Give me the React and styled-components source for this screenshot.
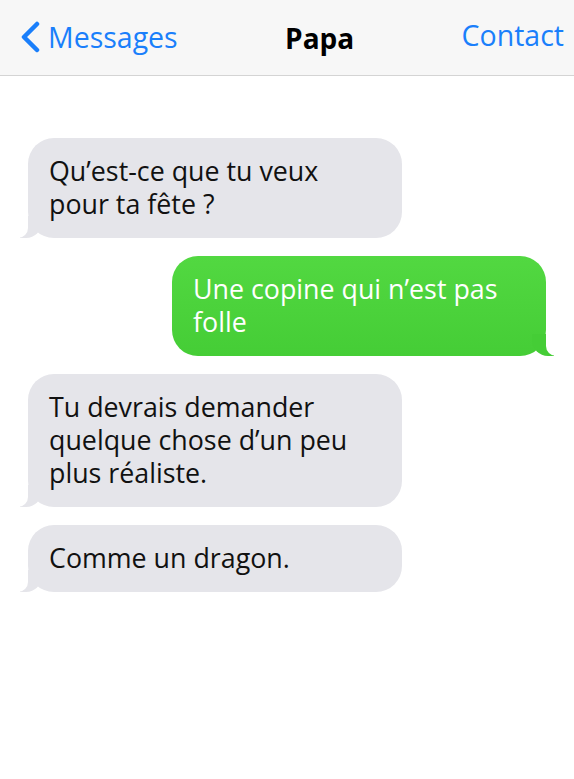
import styled, { createGlobalStyle } from "styled-components"

const GlobalStyle = createGlobalStyle`
  body {
    margin: 0;
    background: #ffffff;
    font-family: "Open Sans", "Liberation Sans", sans-serif;
  }
`;

const Screen = styled.div`
  width: 574px;
  min-height: 779px;
  background: #ffffff;
`;

const Header = styled.header`
  height: 75px;
  display: flex;
  align-items: center;
  justify-content: space-between;
  padding: 0 10px 0 20px;
  background: #f7f7f7;
  border-bottom: 1px solid #d4d4d4;
`;

const BackLink = styled.div`
  display: flex;
  align-items: center;
  gap: 8px;
  color: #1a7ffb;
  font-size: 28.5px;
  margin-top: -2px;
`;

const Title = styled.div`
  font-size: 28px;
  font-weight: 700;
  color: #000000;
  margin-top: 0px;
`;

const HeaderLink = styled.div`
  color: #1a7ffb;
  font-size: 28.5px;
  margin-top: -5px;
`;

const Thread = styled.div`
  display: flex;
  flex-direction: column;
  gap: 18px;
  padding: 62px 28px 0;
`;

const Bubble = styled.div`
  position: relative;
  width: 374px;
  box-sizing: border-box;
  padding: 16px 21px 18px;
  border-radius: 26px;
  font-size: 26.8px;
  line-height: 33px;
  align-self: ${p => (p.$mine ? "flex-end" : "flex-start")};
  color: ${p => (p.$mine ? "#ffffff" : "#111111")};
  background: ${p => (p.$mine ? "linear-gradient(#52d841, #45cd36)" : "#e5e5ea")};

  &::before {
    content: "";
    position: absolute;
    bottom: 0;
    ${p => (p.$mine ? "right: -8px;" : "left: -8px;")}
    width: 22px;
    height: 22px;
    background: ${p => (p.$mine ? "#45cd36" : "#e5e5ea")};
    ${p => (p.$mine ? "border-bottom-left-radius: 16px;" : "border-bottom-right-radius: 16px;")}
  }

  &::after {
    content: "";
    position: absolute;
    bottom: 0;
    ${p => (p.$mine ? "right: -12px;" : "left: -12px;")}
    width: 12px;
    height: 22px;
    background: #ffffff;
    ${p => (p.$mine ? "border-bottom-left-radius: 10px;" : "border-bottom-right-radius: 10px;")}
  }
`;

const messages = [
  { mine: false, text: <>Qu’est-ce que tu veux<br />pour ta fête ?</> },
  { mine: true, text: <>Une copine qui n’est pas<br />folle</> },
  { mine: false, text: <>Tu devrais demander<br />quelque chose d’un peu<br />plus réaliste.</> },
  { mine: false, text: <>Comme un dragon.</> },
];

export default function App() {
  return (
    <Screen>
      <GlobalStyle />
      <Header>
        <BackLink>
          <svg width="20" height="32" viewBox="0 0 20 32">
            <path d="M17 3 L4 16 L17 29" fill="none" stroke="#1a7ffb" strokeWidth="4.5" strokeLinecap="round" strokeLinejoin="round" />
          </svg>
          Messages
        </BackLink>
        <Title>Papa</Title>
        <HeaderLink>Contact</HeaderLink>
      </Header>
      <Thread>
        {messages.map((m, i) => (
          <Bubble key={i} $mine={m.mine}>{m.text}</Bubble>
        ))}
      </Thread>
    </Screen>
  )
}
